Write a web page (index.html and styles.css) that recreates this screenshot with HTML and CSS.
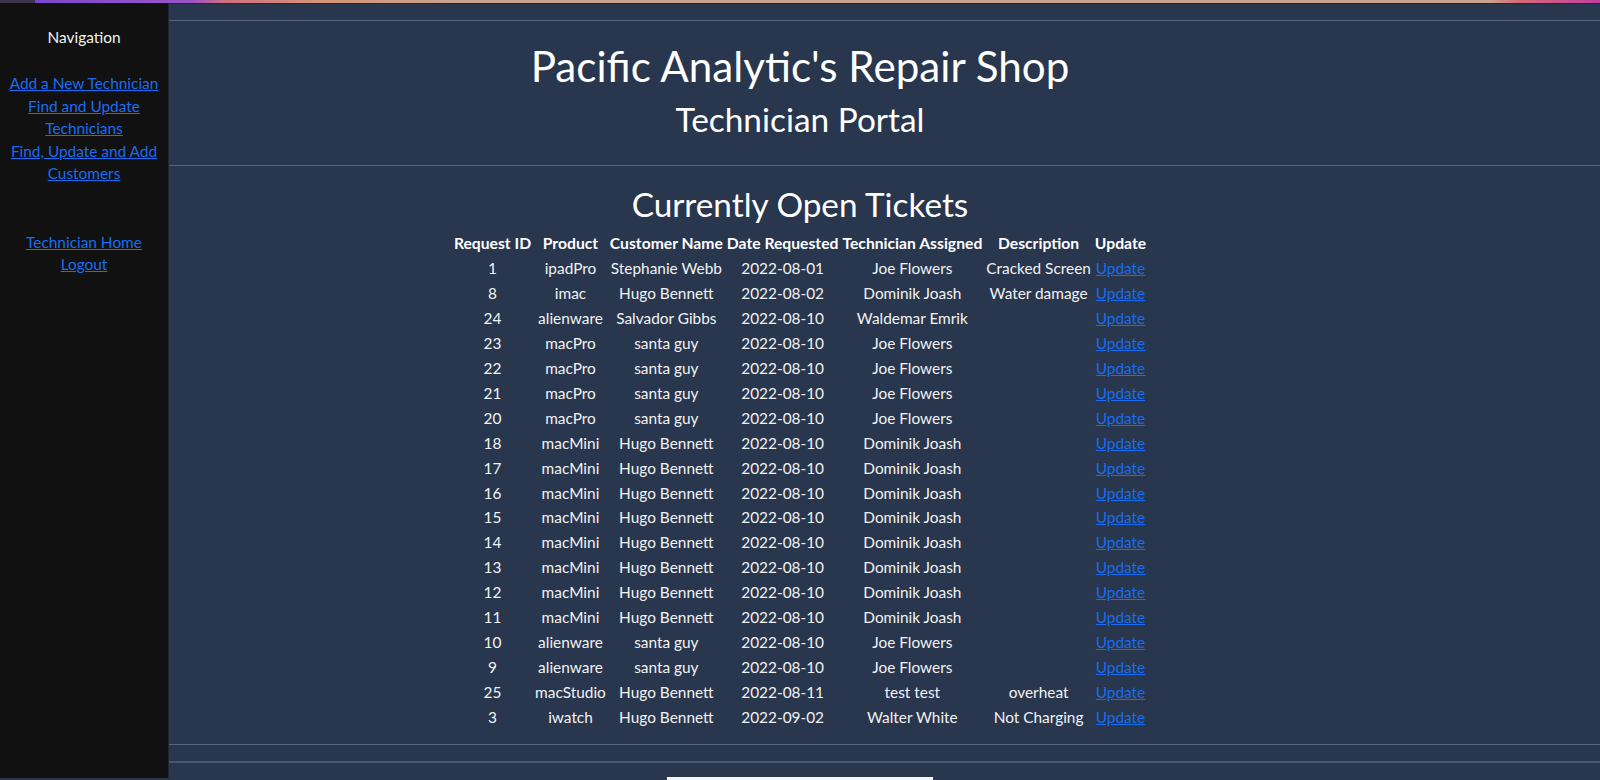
FILE: index.html
```html
<!DOCTYPE html>
<html lang="en">
<head>
<meta charset="utf-8">
<title>Technician Portal</title>
<link rel="stylesheet" href="styles.css">
</head>
<body>
<div class="topbar"></div>
<div class="topline"></div>
<nav class="sidebar">
  <div class="nav-title">Navigation</div>
  <div class="nav-group">
    <a href="#">Add a New Technician</a>
    <a href="#">Find and Update Technicians</a>
    <a href="#">Find, Update and Add Customers</a>
  </div>
  <div class="nav-group second">
    <a href="#">Technician Home</a>
    <a href="#">Logout</a>
  </div>
</nav>
<main class="page">
  <hr class="rule first">
  <header class="head">
    <h1>Pacific Analytic's Repair Shop</h1>
    <h2>Technician Portal</h2>
  </header>
  <hr class="rule">
  <section class="tickets">
    <h2>Currently Open Tickets</h2>
    <table>
      <thead>
        <tr><th>Request ID</th><th>Product</th><th>Customer Name</th><th>Date Requested</th><th>Technician Assigned</th><th>Description</th><th>Update</th></tr>
      </thead>
      <tbody>
        <tr><td>1</td><td>ipadPro</td><td>Stephanie Webb</td><td>2022-08-01</td><td>Joe Flowers</td><td>Cracked Screen</td><td><a href="#">Update</a></td></tr>
        <tr><td>8</td><td>imac</td><td>Hugo Bennett</td><td>2022-08-02</td><td>Dominik Joash</td><td>Water damage</td><td><a href="#">Update</a></td></tr>
        <tr><td>24</td><td>alienware</td><td>Salvador Gibbs</td><td>2022-08-10</td><td>Waldemar Emrik</td><td></td><td><a href="#">Update</a></td></tr>
        <tr><td>23</td><td>macPro</td><td>santa guy</td><td>2022-08-10</td><td>Joe Flowers</td><td></td><td><a href="#">Update</a></td></tr>
        <tr><td>22</td><td>macPro</td><td>santa guy</td><td>2022-08-10</td><td>Joe Flowers</td><td></td><td><a href="#">Update</a></td></tr>
        <tr><td>21</td><td>macPro</td><td>santa guy</td><td>2022-08-10</td><td>Joe Flowers</td><td></td><td><a href="#">Update</a></td></tr>
        <tr><td>20</td><td>macPro</td><td>santa guy</td><td>2022-08-10</td><td>Joe Flowers</td><td></td><td><a href="#">Update</a></td></tr>
        <tr><td>18</td><td>macMini</td><td>Hugo Bennett</td><td>2022-08-10</td><td>Dominik Joash</td><td></td><td><a href="#">Update</a></td></tr>
        <tr><td>17</td><td>macMini</td><td>Hugo Bennett</td><td>2022-08-10</td><td>Dominik Joash</td><td></td><td><a href="#">Update</a></td></tr>
        <tr><td>16</td><td>macMini</td><td>Hugo Bennett</td><td>2022-08-10</td><td>Dominik Joash</td><td></td><td><a href="#">Update</a></td></tr>
        <tr><td>15</td><td>macMini</td><td>Hugo Bennett</td><td>2022-08-10</td><td>Dominik Joash</td><td></td><td><a href="#">Update</a></td></tr>
        <tr><td>14</td><td>macMini</td><td>Hugo Bennett</td><td>2022-08-10</td><td>Dominik Joash</td><td></td><td><a href="#">Update</a></td></tr>
        <tr><td>13</td><td>macMini</td><td>Hugo Bennett</td><td>2022-08-10</td><td>Dominik Joash</td><td></td><td><a href="#">Update</a></td></tr>
        <tr><td>12</td><td>macMini</td><td>Hugo Bennett</td><td>2022-08-10</td><td>Dominik Joash</td><td></td><td><a href="#">Update</a></td></tr>
        <tr><td>11</td><td>macMini</td><td>Hugo Bennett</td><td>2022-08-10</td><td>Dominik Joash</td><td></td><td><a href="#">Update</a></td></tr>
        <tr><td>10</td><td>alienware</td><td>santa guy</td><td>2022-08-10</td><td>Joe Flowers</td><td></td><td><a href="#">Update</a></td></tr>
        <tr><td>9</td><td>alienware</td><td>santa guy</td><td>2022-08-10</td><td>Joe Flowers</td><td></td><td><a href="#">Update</a></td></tr>
        <tr><td>25</td><td>macStudio</td><td>Hugo Bennett</td><td>2022-08-11</td><td>test test</td><td>overheat</td><td><a href="#">Update</a></td></tr>
        <tr><td>3</td><td>iwatch</td><td>Hugo Bennett</td><td>2022-09-02</td><td>Walter White</td><td>Not Charging</td><td><a href="#">Update</a></td></tr>
      </tbody>
    </table>
  </section>
  <hr class="rule">
  <hr class="rule thick">
  <footer class="foot"><div class="foot-bar"></div></footer>
</main>
</body>
</html>
```

FILE: styles.css
```css
html, body {
  margin: 0;
  padding: 0;
  height: 100%;
  overflow: hidden;
}
body {
  background: #28364e;
  color: #ffffff;
  font-family: Lato, "Open Sans", "Liberation Sans", sans-serif;
  font-size: 16px;
}
a {
  color: #1a6cf0;
  text-decoration: underline;
}
.topbar {
  height: 3px;
  background: linear-gradient(90deg, #3b3350 0%, #3b3350 2.2%, #7a48cc 2.2%, #9a55c8 12%, #d07080 14%, #d49478 20%, #c9a38c 28%, #c9a38c 93%, #d46a78 95%, #c040a0 100%);
}
.topline {
  height: 1px;
  background: #0e2c55;
}
.sidebar {
  position: fixed;
  left: 0;
  top: 3px;
  bottom: 2px;
  width: 168px;
  background: #111111;
  border-right: 1px solid #1f2736;
  text-align: center;
  display: flex;
  flex-direction: column;
  align-items: center;
  font-size: 15.4px;
}
.nav-title {
  margin-top: 23px;
  line-height: 22px;
  color: #f2f2f2;
}
.nav-group {
  margin-top: 24px;
  display: flex;
  flex-direction: column;
  align-items: center;
  line-height: 22.5px;
  padding: 0 8px;
}
.nav-group.second {
  margin-top: 46px;
}
.page {
  display: flex;
  flex-direction: column;
  align-items: center;
}
.rule {
  align-self: stretch;
  border: 0;
  border-top: 1px solid #56657c;
  margin: 0;
  height: 0;
}
.rule.first {
  margin-top: 16px;
}
.head {
  display: flex;
  flex-direction: column;
  align-items: center;
}
.head h1 {
  margin: 21px 0 0;
  font-size: 42.2px;
  font-weight: 400;
  line-height: 48px;
}
.head h2 {
  margin: 10px 0 27px;
  font-size: 33.4px;
  font-weight: 400;
  line-height: 38px;
}
.tickets {
  display: flex;
  flex-direction: column;
  align-items: center;
}
.tickets h2 {
  margin: 19px 0 7px;
  font-size: 33.3px;
  font-weight: 400;
  line-height: 38px;
}
table {
  border-spacing: 2px;
  margin-bottom: 13px;
}
th, td {
  padding: 1px;
  line-height: 20.95px;
  text-align: center;
  white-space: nowrap;
}
th {
  font-weight: 700;
  font-size: 15.7px;
}
td {
  color: #f2f2f2;
  font-size: 15.4px;
}
.rule.thick {
  border-top: 2px solid #4a586d;
  margin-top: 16px;
}
.foot {
  margin-top: 14px;
}
.foot-bar {
  width: 266px;
  height: 3px;
  background: #f4f6f8;
}
```
